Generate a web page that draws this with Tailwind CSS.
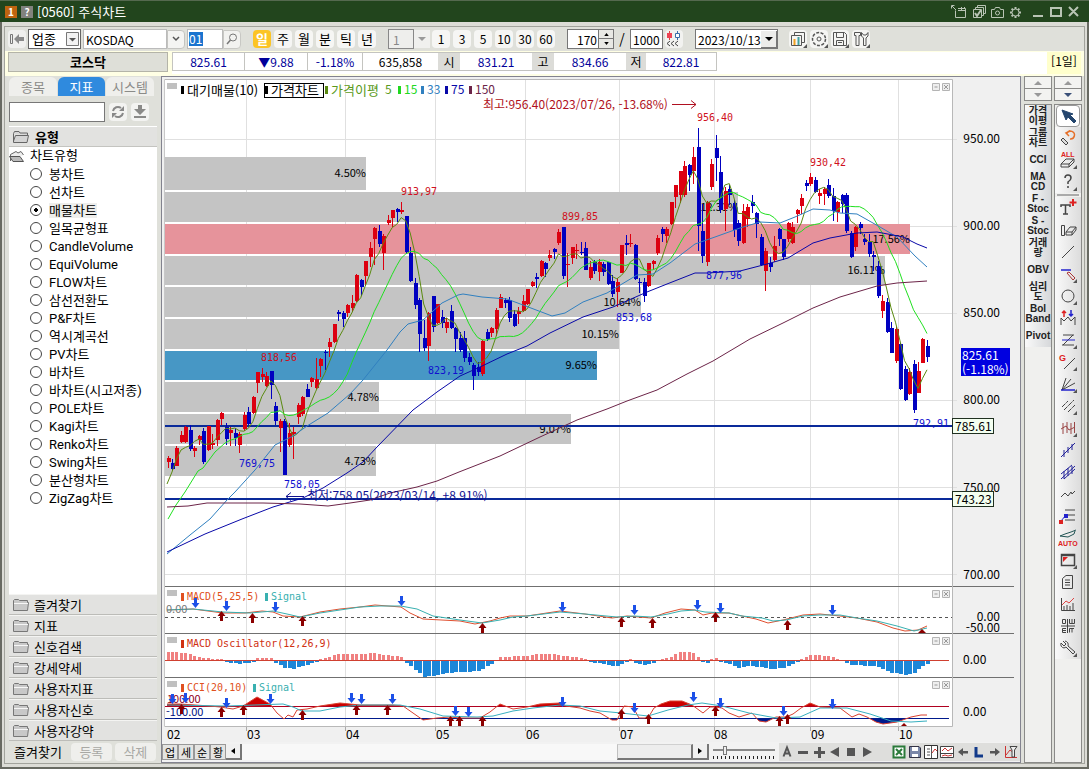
<!DOCTYPE html>
<html lang="ko">
<head>
<meta charset="utf-8">
<title>[0560] 주식차트</title>
<script src="https://cdn.jsdelivr.net/npm/@tailwindcss/browser@4"></script>
</head>
<body class="h-screen overflow-hidden bg-[#dcdcd6] font-['Noto_Sans_CJK_KR',sans-serif] text-xs text-black">
<div class="flex h-screen flex-col border-x-2 border-b-2 border-[#686a62] bg-[#dcdcd6]">
  <header class="-mx-[2px] flex h-[22px] shrink-0 items-center gap-1 border-t border-[#55694f] bg-[#22451d] pr-2 pl-[5px] text-white">
    <span class="flex h-3 w-3 items-center justify-center bg-[#bf6410] text-[10px] font-bold">1</span>
    <button class="flex h-3 w-3 items-center justify-center bg-[#82827e] text-[10px] font-bold" aria-label="도움말">?</button>
    <h1 class="grow text-[13px] leading-5">[0560] 주식차트</h1>
    <svg class="h-[14px] w-[130px]" viewBox="0 0 130 14" fill="none" stroke="#b9c4b5" stroke-width="1">
      <path d="M4.500 5.500V12.500H14.500V3.500H7M7 5.500H14.500M10.500 2V5M13.500 2V4M0.500 3.500V0.500H3.500M1 1L5 5"/>
      <path d="M22.500 4.500H30.500V12.500H22.500ZM24.500 4V2.500H32.500V10.500H31M26.500 2V0.500H34.500V8.500H33"/><path d="M24 8L26 11L30 5" stroke-width="2"/>
      <path d="M40.500 4.500H43.500L44.500 2.500H48.500L49.500 4.500H52.500V12.500H40.500Z"/><circle cx="46.500" cy="8" r="2"/>
      <circle cx="64.500" cy="7.500" r="3.500"/><path stroke-width="2" d="M64.500 2V4M64.500 11V13M59 7.500H61M68 7.500H70M60.600 3.600L62 5M67 10L68.400 11.400M60.600 11.400L62 10M67 5L68.400 3.600"/>
      <path stroke-width="2" d="M82 11H92M100 3H110V11H100ZM118 2L127 11M127 2L118 11"/>
    </svg>
  </header>

  <div class="mx-[2px] mt-[4px] mb-[3px] flex min-h-0 grow flex-col border border-[#a2a39c] bg-[#dfe0da]">
    <!-- toolbar -->
    <div class="flex h-[24px] shrink-0 items-center pl-[3px]">
      <button aria-label="이전" class="mr-[2px] flex h-[18px] w-[18px] items-center justify-center rounded-sm bg-[#f0f0ee]"><svg class="h-3 w-4" viewBox="0 0 16 12"><path d="M1.500 1.500H3.500V10.500H1.500Z" fill="none" stroke="#777"/><path d="M5 6L10 1V4H15V8H10V11Z" fill="#8a8a8a"/></svg></button>
      <div class="relative mr-[2px]"><select aria-label="구분" class="h-[20px] w-[53px] appearance-none border border-[#666] bg-white pl-[3px] text-[13px] leading-4"><option>업종</option></select>
        <svg class="pointer-events-none absolute top-[3px] right-[2px] h-[14px] w-[13px]" viewBox="0 0 13 14"><path d="M.5.5H12.500V13.500H.5Z" fill="#f2f2f2" stroke="#777"/><path d="M3 6H10L6.500 9.500Z" fill="#555"/></svg></div>
      <input aria-label="종목명" value="KOSDAQ" class="h-[20px] w-[84px] border border-[#bbb] bg-white pl-[2px] text-xs">
      <button aria-label="목록" class="mr-[2px] flex h-[19px] w-[18px] items-center justify-center rounded-r-sm border border-[#c4c4c0] bg-[#f4f4f2]"><svg class="h-[6px] w-[8px]" viewBox="0 0 8 6"><path d="M1 1L4 4L7 1" fill="none" stroke="#555" stroke-width="1.500"/></svg></button>
      <div class="flex h-[20px] w-[36px] items-center border border-[#bbb] bg-white pl-px"><input aria-label="코드" value="01" class="h-[14px] w-[14px] bg-[#1a74cf] text-xs text-white"></div>
      <button aria-label="검색" class="mr-3 flex h-[19px] w-[18px] items-center justify-center rounded-r-sm border border-[#c8c8c4] bg-[#f2f2f0]"><svg class="h-3 w-3" viewBox="0 0 12 12" fill="none" stroke="#777"><circle cx="7" cy="4.500" r="3.500"/><path d="M4.500 7L1 11" stroke-width="1.500"/></svg></button>
      <div class="mr-[12px] flex gap-[3px]" id="periods"></div>
      <input aria-label="분 단위" value="1" disabled class="h-[20px] w-[26px] border border-[#888] bg-[#eeeeec] pl-1 text-xs text-[#888]">
      <button aria-label="분 목록" class="mr-[2px] flex h-[18px] w-[16px] items-center justify-center bg-[#f0f0ee]"><svg class="h-1 w-2" viewBox="0 0 8 4"><path d="M0 0H8L4 4Z" fill="#999"/></svg></button>
      <div class="mr-[12px] flex gap-[3px]" id="minutes"></div>
      <input aria-label="조회 개수" value="170" class="h-[20px] w-[31px] border border-r-0 border-[#777] bg-white pr-px text-right text-xs">
      <div class="flex h-[20px] w-[16px] flex-col border border-[#777] bg-[#e8e8e4]">
        <button aria-label="증가" class="flex h-[9px] items-center justify-center border-b border-[#777]"><svg class="h-[3px] w-[5px]" viewBox="0 0 6 4"><path d="M0 4H6L3 0Z"/></svg></button>
        <button aria-label="감소" class="flex h-[9px] items-center justify-center"><svg class="h-[3px] w-[5px]" viewBox="0 0 6 4"><path d="M0 0H6L3 4Z"/></svg></button>
      </div>
      <span class="w-[16px] text-center text-sm leading-4">/</span>
      <input aria-label="전체 개수" value="1000" class="mr-[2px] h-[20px] w-[33px] border border-[#777] bg-white pl-[2px] text-xs">
      <button aria-label="과거 조회" class="mr-[12px] h-[18px] w-[18px] rounded-sm bg-[#f2f2f0]"><svg class="h-[18px] w-[18px]" viewBox="0 0 18 18" fill="none"><path d="M4.500 1V10" stroke="#d44"/><path d="M2 3H7V8H2Z" fill="#e45"/><path d="M12.500 1V10" stroke="#3a6ea8"/><path d="M10.500 3.500H14.500V7.500H10.500Z" fill="#fff" stroke="#3a6ea8"/><path d="M5 11L2 13.500L5 16M9 11L6 13.500L9 16M13 11L10 13.500L13 16" stroke="#444"/></svg></button>
      <div class="relative mr-[11px]"><input aria-label="날짜" value="2023/10/13" class="h-[20px] w-[83px] border border-[#777] bg-white pl-[2px] text-xs">
        <button aria-label="달력" class="absolute top-[2px] right-px flex h-[17px] w-[16px] items-center justify-center border-r border-b border-[#777] bg-[#ececea]"><svg class="h-1 w-2" viewBox="0 0 8 4"><path d="M0 0H8L4 4Z"/></svg></button></div>
      <div class="flex gap-[3px]" id="tools"></div>
    </div>

    <!-- quote row -->
    <div class="flex h-[25px] shrink-0 items-start bg-[#ffffe4] pt-px pb-[2px] pl-[3px]">
      <h2 class="mr-[4px] flex h-[20px] w-[160px] items-center justify-center border border-[#b4b4a8] bg-[#dedfd8] text-[13px] font-bold">코스닥</h2>
      <div class="flex h-full grow items-start bg-white">
        <dl class="flex h-[19px] border border-[#c4c4c0] text-center leading-[17px] text-[#00009a]">
          <dd class="w-[71px]">825.61</dd>
          <dd class="w-[63px] border-l border-[#c4c4c0]">▼9.88</dd>
          <dd class="w-[55px] border-l border-[#c4c4c0]">-1.18%</dd>
          <dd class="w-[76px] border-l border-[#c4c4c0] text-black">635,858</dd>
          <dt class="w-[22px] bg-[#dcdcd8] text-black">시</dt><dd class="w-[72px]">831.21</dd>
          <dt class="w-[22px] bg-[#dcdcd8] text-black">고</dt><dd class="w-[72px]">834.66</dd>
          <dt class="w-[20px] bg-[#dcdcd8] text-black">저</dt><dd class="w-[70px]">822.81</dd>
        </dl>
      </div>
      <span class="mr-[3px] flex h-full w-[34px] items-center justify-center bg-[#ffffcc] pb-1">[1일]</span>
    </div>

    <div class="flex min-h-0 grow">
      <!-- indicator tree -->
      <aside class="mr-[4px] ml-[4px] flex w-[148px] shrink-0 flex-col">
        <div class="mt-px flex h-[19px] gap-px text-center text-[13px] leading-[17px] text-[#8b8b88]">
          <button class="w-[48px] rounded-t-md bg-[#efefec]">종목</button>
          <button class="w-[47px] rounded-t-md bg-[#2f8ade] text-white">지표</button>
          <button class="w-[48px] rounded-t-md bg-[#efefec]">시스템</button>
        </div>
        <div class="flex h-[30px] items-center gap-1 pt-[2px]">
          <input aria-label="지표 검색" class="h-[20px] w-[96px] border border-[#777] bg-white px-1">
          <button aria-label="새로고침" class="flex h-[18px] w-[18px] items-center justify-center rounded-sm bg-[#f3f3f1]"><svg class="h-[14px] w-[14px]" viewBox="0 0 14 14"><path d="M2 6A5 5 0 0 1 10 3M12 8A5 5 0 0 1 4 11" fill="none" stroke="#888" stroke-width="2"/><path d="M8 6H13V1ZM6 8H1V13Z" fill="#888"/></svg></button>
          <button aria-label="내려받기" class="flex h-[18px] w-[18px] items-center justify-center rounded-sm bg-[#f3f3f1]"><svg class="h-[14px] w-[14px]" viewBox="0 0 14 14"><path d="M5 0H9V4H13L7 10L1 4H5ZM1 11H13V13H1Z" fill="#8a8a88"/></svg></button>
        </div>
        <button class="flex h-[21px] shrink-0 items-center gap-[6px] border-y border-t-white border-b-[#c4c4c0] bg-[#e2e2e0] pl-[4px] text-[13px] font-bold"><svg class="h-3 w-4" viewBox="0 0 16 12"><path d="M.5 2.500L1.500 .5H6L7 2H14.500V4M.5 2.500V11.500H14L15.500 4.500H2.500L.5 10" fill="#d4d4d4" stroke="#666"/></svg>유형</button>
        <div class="min-h-0 grow bg-white font-['Roboto','Noto_Sans_CJK_KR',sans-serif]">
          <div class="flex h-[18px] items-center gap-[5px] text-[13px]"><svg class="h-[14px] w-4" viewBox="0 0 16 14"><path d="M1.500 12V5.500L7 2.500L9 4L12 2.500L14.500 6" fill="#eee" stroke="#666"/><path d="M.5 7.500H11L14.500 12.500H4Z" fill="#bbb" stroke="#555"/></svg>차트유형</div>
          <div id="tree"></div>
        </div>
        <div id="groups" class="shrink-0"></div>
        <div class="flex h-[22px] shrink-0 items-center gap-[3px] pl-[5px] text-[13px]">
          <span class="mr-[6px]">즐겨찾기</span>
          <button disabled class="h-[18px] w-[41px] rounded-sm bg-[#efefec] leading-4 text-[#a8a8a4]">등록</button>
          <button disabled class="h-[18px] w-[41px] rounded-sm bg-[#efefec] leading-4 text-[#a8a8a4]">삭제</button>
        </div>
      </aside>

      <!-- chart -->
      <main class="flex min-w-0 grow flex-col border border-[#83838f] bg-[#f0f0f0]">
        <svg id="chart" class="min-h-0 w-full grow" viewBox="162 77 858 665" preserveAspectRatio="xMinYMin meet" role="img" aria-label="KOSDAQ 일봉 차트"></svg>
        <div class="flex h-[20px] shrink-0 items-center bg-[#f2f2f2]">
          <div id="cats" class="flex"></div>
          <button aria-label="왼쪽" class="flex h-[16px] w-[16px] items-center justify-center border-r-2 border-b-2 border-[#777] bg-[#f0f0f0]"><svg class="h-[6px] w-[4px]" viewBox="0 0 4 6"><path d="M4 0V6L0 3Z"/></svg></button>
          <div class="flex h-[16px] grow justify-end bg-[#f8f8f8]"><div class="w-[76px] border-t border-r-2 border-b-2 border-l border-t-[#d0d0d0] border-r-[#777] border-b-[#777] border-l-[#c0c0c0] bg-[#ededed]"></div></div>
          <button aria-label="오른쪽" class="mr-1 flex h-[16px] w-[16px] items-center justify-center border-r-2 border-b-2 border-[#777] bg-[#f0f0f0]"><svg class="h-[6px] w-[4px]" viewBox="0 0 4 6"><path d="M0 0V6L4 3Z"/></svg></button>
          <div class="mr-1 flex w-[62px] flex-col">
            <input type="range" aria-label="확대" min="0" max="100" value="18" class="h-[9px] w-full appearance-none bg-transparent [&::-webkit-slider-runnable-track]:h-[2px] [&::-webkit-slider-runnable-track]:bg-[#888] [&::-webkit-slider-thumb]:-mt-[3px] [&::-webkit-slider-thumb]:h-[9px] [&::-webkit-slider-thumb]:w-[4px] [&::-webkit-slider-thumb]:appearance-none [&::-webkit-slider-thumb]:border [&::-webkit-slider-thumb]:border-[#777] [&::-webkit-slider-thumb]:bg-[#eee]">
            <svg class="h-[5px] w-full" viewBox="0 0 62 5"><path d="M0 3.500H62" stroke="#222" stroke-width="3" stroke-dasharray="1 3"/></svg>
          </div>
          <div id="nav" class="flex h-[18px] w-[241px] shrink-0 items-center bg-[#dededc]"></div>
        </div>
      </main>

      <!-- quick indicators -->
      <div class="ml-[3px] flex w-[28px] shrink-0 flex-col gap-[3px]">
        <div class="flex h-[25px] flex-col border border-[#8a8a88] bg-[#f3f3f1]">
          <button aria-label="지표 위로" class="flex h-[12px] items-center justify-center border-b border-[#8a8a88]"><svg class="h-1 w-2" viewBox="0 0 8 4"><path d="M0 4H8L4 0Z" fill="#999"/></svg></button>
          <button aria-label="지표 아래로" class="flex h-[11px] items-center justify-center"><svg class="h-1 w-2" viewBox="0 0 8 4"><path d="M0 0H8L4 4Z" fill="#999"/></svg></button>
        </div>
        <div id="quick" class="flex grow flex-col border border-[#8a8a88] bg-[#f0f0ee]"></div>
      </div>
      <!-- drawing tools -->
      <div class="mr-[2px] ml-[2px] flex w-[28px] shrink-0 flex-col gap-[3px]">
        <div class="flex h-[25px] flex-col border border-[#8a8a88] bg-[#f3f3f1]">
          <button aria-label="도구 위로" class="flex h-[12px] items-center justify-center border-b border-[#8a8a88]"><svg class="h-1 w-2" viewBox="0 0 8 4"><path d="M0 4H8L4 0Z" fill="#999"/></svg></button>
          <button aria-label="도구 아래로" class="flex h-[11px] items-center justify-center"><svg class="h-1 w-2" viewBox="0 0 8 4"><path d="M0 0H8L4 4Z" fill="#3a5078"/></svg></button>
        </div>
        <div id="draw" class="flex grow flex-col items-center border border-[#8a8a88] bg-[#f0f0ee]"></div>
      </div>
    </div>
  </div>
</div>

<script>
const $ = id => document.getElementById(id);
$('periods').innerHTML = ['일','주','월','분','틱','년'].map((t,i)=>`<button class="${i?'h-[18px] w-[18px] rounded-sm bg-[#f6f6f4] text-[13px] leading-4':'h-[18px] w-[18px] rounded-sm bg-[#fcc425] text-[13px] leading-4 font-bold text-white'}">${t}</button>`).join('');
$('minutes').innerHTML = [1,3,5,10,30,60].map(t=>`<button class="h-[18px] w-[18px] rounded-sm bg-[#f6f6f4] text-xs leading-4">${t}</button>`).join('');
const corner='<path d="M18 14V18H14Z" fill="#555" stroke="none"/>';
$('tools').innerHTML = [
 ['차트 추가','<path d="M5.500 5V2.500H15.500V12.500H13M2.500 5.500H12.500V15.500H2.500Z"/><path d="M5.500 9V15" stroke="#f0a020" stroke-width="2"/><path d="M9.500 7V15" stroke="#40a0a0" stroke-width="2"/>'],
 ['설정','<circle cx="9" cy="9" r="2"/><circle cx="9" cy="9" r="6.500" stroke-dasharray="3 1.500" stroke-width="1.500"/>'],
 ['저장','<path d="M2.500 2.500H13.500L15.500 4.500V15.500H2.500ZM5.500 3V7.500H12.500V3M5.500 15V10.500H12.500V15M7 12.500H11"/>'],
 ['도구','<path d="M2.500 2.500H8.500V5.500H7V15.500H4V5.500H2.500ZM9.500 2.500V6L11.500 8V15.500H14V8L16 6V2.500L14 5H11.500Z"/>']
].map(([n,p])=>`<button aria-label="${n}" class="h-[18px] w-[18px] rounded-sm bg-[#f5f5f3]"><svg class="h-[18px] w-[18px]" viewBox="0 0 18 18" fill="none" stroke="#555">${p}${corner}</svg></button>`).join('');
$('tree').innerHTML = ['봉차트','선차트','매물차트','일목균형표','CandleVolume','EquiVolume','FLOW차트','삼선전환도','P&amp;F차트','역시계곡선','PV차트','바차트','바차트(시고저종)','POLE차트','Kagi차트','Renko차트','Swing차트','분산형차트','ZigZag차트']
 .map((t,i)=>`<label class="flex h-[18px] items-center gap-[7px] pl-[21px]"><input type="radio" name="kind" ${i==2?'checked':''} class="h-3 w-3 shrink-0 appearance-none rounded-full border border-[#444] bg-white checked:bg-[radial-gradient(#000_0_2px,#fff_2px)]"><span class="${i==2?'bg-[#eeeeec] text-[13px] leading-[15px] whitespace-nowrap':'text-[13px] leading-[15px] whitespace-nowrap'}">${t}</span></label>`).join('');
$('groups').innerHTML = ['즐겨찾기','지표','신호검색','강세약세','사용자지표','사용자신호','사용자강약']
 .map(t=>`<button class="flex h-[21px] w-full items-center gap-[5px] border-t border-b border-t-[#f4f4f2] border-b-[#bcbcb8] bg-[#e2e2e0] pl-[4px] text-[13px] leading-4"><svg class="h-3 w-4" viewBox="0 0 16 12"><path d="M.5 11.500V1.500L1.500 .5H5.500L6.500 1.500H14.500V3.500H15.500L14.500 11.500Z" fill="#c8c8c8" stroke="#777"/><path d="M1 4.500H15" stroke="#f6f6f6"/></svg>${t}</button>`).join('');
$('cats').innerHTML = ['업','세','순','황'].map(t=>`<button class="h-[16px] w-[16px] border border-[#999] bg-[#e4e4e2] text-[11px] leading-[13px]">${t}</button>`).join('');
$('nav').innerHTML = [
 ['글자','<path d="M4.500 12.500L8 3.500L11.500 12.500M6 9.500H10" fill="none" stroke="#555" stroke-width="2"/>'],
 ['축소','<path d="M3 7H13V10H3Z" fill="#555"/>'],['확대','<path d="M3 7H7V3H10V7H14V10H10V14H7V10H3Z" fill="#555"/>'],
 ['이전','<path d="M12 3V13L3 8Z" fill="#555"/>'],['정지','<path d="M4 4H12V12H4Z" fill="#555"/>'],['다음','<path d="M4 3V13L13 8Z" fill="#555"/>'],['',''],
 ['엑셀','<path d="M2.500 2.500H13.500V13.500H2.500Z" fill="#fff" stroke="#2a7a3a" stroke-width="2"/><path d="M5 5L11 11M11 5L5 11" stroke="#2a7a3a" stroke-width="2"/>'],
 ['저장','<path d="M2.500 2.500H12L13.500 4V13.500H2.500Z" fill="#7a87a8" stroke="#334"/><path d="M5 3H11V7H5ZM5 10H11V13H5Z" fill="#fff"/>'],
 ['차트 1','<path d="M1.500 1.500H14.500V14.500H1.500Z" fill="#fff" stroke="#333"/><path d="M8.500 2V14M4 5H7M4 8H7M4 11H7" stroke="#555"/><path d="M9 9L12 5L14 7" stroke="#c33" fill="none"/>'],
 ['차트 2','<path d="M1.500 2.500H14.500V13.500H1.500ZM2 9.500H14" fill="#fff" stroke="#444"/><path d="M3 7L6 4L9 7L13 4M3 12L6 11L9 12L13 11" stroke="#c33" fill="none"/>'],
 ['왼쪽','<path d="M3 8L8 4V7H13V9.500H8V12Z" fill="#555"/>'],['기준선','<path d="M5 3V12H12" fill="none" stroke="#123a8a" stroke-width="3"/>'],['오른쪽','<path d="M13 8L8 4V7H3V9.500H8V12Z" fill="#555"/>'],
 ['환경','<path d="M2.500 2V13.500H14M3 11L7 6L11 9" fill="none" stroke="#c33"/><path d="M7 2.500H14L11.500 6V13H9V6Z" fill="#eee" stroke="#444"/>']
].map(([n,p])=>n?`<button aria-label="${n}" class="h-4 w-4"><svg class="h-4 w-4" viewBox="0 0 16 16">${p}</svg></button>`:'<span class="w-4"></span>').join('');
$('quick').innerHTML = ['가격<br>이평','그룹<br>차트','CCI','MA<br>CD','F -<br>Stoc','S -<br>Stoc','거래<br>량','OBV','심리<br>도','Bol<br>Band','Pivot']
 .map(t=>`<button class="flex h-[22px] w-full shrink-0 items-center justify-center bg-linear-to-r from-[#fafafa] to-[#d6d8da] font-['Liberation_Sans','Noto_Sans_CJK_KR',sans-serif] text-[10px] leading-[10px] font-bold text-[#222]"><span>${t}</span></button>`).join('');
const tri='<path d="M19 15V19H15Z" fill="#555" stroke="none"/>';
$('draw').innerHTML = [
 ['선택','<path d="M4 4L15 8L12 9L18 15L16 17L10 11L8 14Z" fill="#24466e" stroke="#24466e"/>'],
 ['되돌리기','<path d="M9 5A4 4 0 1 1 12 11M12 3L8 5L11 8" stroke="#e5702a" stroke-width="1.500"/><path d="M3 12L5 10L10 15L8 17Z" fill="#ddd"/>'],
 ['전체 삭제','<text x="3" y="7" font-size="7" font-weight="bold" fill="#d22" stroke="none" font-family="Liberation Sans">ALL</text><path d="M3 14L8 9H16L11 14ZM3 14V17H11V14M11 17L16 12V9"/>'+tri],
 ['도움말','<path d="M7 6Q7 3 10 3T13 6Q13 8 10 10V12M10 14V16" stroke-width="1.500"/>'+tri],
 ['-',''],
 ['문자','<path d="M3 9V7H12V9M7.500 7V16M5 16H10" stroke-width="1.500"/><path d="M15 1V8M11.500 4.500H18.500" stroke="#d22" stroke-width="2"/>'],
 ['지우개','<path d="M3.500 5.500H6.500V15.500H3.500ZM8 12L12 7H18L14 12ZM8 12V15H14L18 10V7M14 12V15"/>'],
 ['직선','<path d="M4 16L16 4"/>'],
 ['수평선','<path d="M3 6H13" stroke="#22c" stroke-width="1.500"/><path d="M9 9L11 8L17 14L15 16Z" stroke="#a33"/>'+tri],
 ['원','<circle cx="10" cy="10" r="6"/>'+tri],
 ['패턴','<path d="M3 17V10L6 13L10 9L13 13L17 9V17"/><path d="M6 9V3M4 5L6 3L8 5" stroke="#d22" stroke-width="1.500"/><path d="M13 2V8M11 6L13 8L15 6" stroke="#22c" stroke-width="1.500"/>'],
 ['삼분선','<path d="M5 5H16M4 15H16M5 15L15 5"/><path d="M4 10H17" stroke="#22c"/>'+tri],
 ['갠','<path d="M6 17L17 6"/><text x="1" y="9" font-size="9" font-weight="bold" fill="#d22" stroke="none" font-family="Liberation Sans">G</text>'+tri],
 ['팬','<path d="M4 16L8 4M4 16L13 5M4 16L17 9"/><path d="M3 16H17" stroke="#22c" stroke-width="1.500"/>'+tri],
 ['평행','<path d="M4 11L10 5M6 14L16 4M10 16L17 9" stroke-dasharray="5 1"/>'+tri],
 ['주기','<path d="M5 5V16M9 4V15M13 5V16M16.500 4V15M3 11L8 8L11 12L17 9" stroke="#944"/>'+tri],
 ['채널','<path d="M3 17L17 3M6 10V17M10 7V13M14 4V10" stroke="#229"/>'],
 ['이중채널','<path d="M3 12L14 3M6 17L17 7M3 17L17 4M6 9V17M10 6V14M14 4V12" stroke="#229"/>'],
 ['꺾은선','<path d="M3 13L7 9L10 12L13 8L14 10L17 7"/>'],
 ['피보나치','<path d="M7 4H17M8 9H17M7 14H17"/><path d="M3 15L8 9" stroke="#22c"/><path d="M1 14H5V18H1Z" fill="#d22" stroke="none"/><path d="M6 8H10V12H6Z" fill="#22c" stroke="none"/>'],
 ['자동','<path d="M2 8L7 6L13 4L18 2M2 8L10 9L16 6L17 3" stroke="#255"/><text x="0" y="18" font-size="7" font-weight="bold" fill="#d22" stroke="none" font-family="Liberation Sans">AUTO</text>'],
 ['창','<path d="M3.500 4.500H16.500V15.500H3.500ZM3.500 5.500H16.500" stroke-width="1.500"/><path d="M5 7H10L5 12Z" fill="#d22" stroke="none"/>'+tri],
 ['문서','<path d="M4.500 6.500L8 3.500H14.500V16.500H4.500ZM7 8H12M7 10.500H12M7 13H12"/>'],
 ['통계','<path d="M3.500 4V16.500H17M6 16V12M9 16V11M12 16V12M15 16V9"/><path d="M4 11L8 7L11 9L16 4" stroke="#d44"/>'],
 ['분할','<path d="M4.500 3.500H7.500V7.500H4.500ZM11.500 3V7.500H16.500V3M14 3V7M8 12.500H4.500V16.500H8M4.500 14.500H8M16 12.500H11.500V16.500M14 12.500V16.500M3 10H17M9.500 3V17"/>'],
 ['공구','<path d="M5 3L8 6L6 8L3 5Q2 9 6 10L8 9L15 16L17 14L10 8Q11 4 7 3"/>'+tri]
].map(([n,p],i)=>n=='-'?'<hr class="my-px w-[22px] border-t-2 border-[#aaa]">':`<button aria-label="${n}" class="${i?'flex h-[22px] w-full shrink-0 items-center justify-center bg-linear-to-r from-[#fafafa] to-[#dcdcdc]':'flex h-[22px] w-[24px] shrink-0 items-center justify-center rounded-sm border border-[#999] bg-white'}"><svg class="h-5 w-5" viewBox="0 0 20 20" fill="none" stroke="#444">${p}</svg></button>`).join('');

/* Chart: [high, body top, body bottom, low], negative first value marks a falling day */
const D=`456,458,462,468 -459,463,469,470 446,448,466,466 431,435,442,443 426,427,442,443 -425,430,449,451 446,448,451,457 435,436,440,445 -428,431,462,464 426,426,450,451 434,443,445,449 419,420,440,446 412,413,419,425 -423,427,439,445 427,430,433,446 -428,433,438,446 432,434,445,453 412,415,429,431 -407,412,424,425 396,397,413,414 372,372,383,393 368,374,377,382 372,376,386,387 -371,371,385,399 -402,406,421,425 419,421,428,452 -419,421,475,475 423,433,445,447 427,432,434,459 403,405,417,424 396,397,414,416 -384,389,397,397 377,378,382,387 358,379,388,389 358,359,366,377 -350,352,353,370 338,342,347,357 324,324,342,343 -310,312,314,321 -311,313,319,327 304,305,313,317 295,303,308,312 274,275,301,302 -279,280,287,296 261,261,276,286 242,248,257,267 227,228,239,265 -225,231,244,247 234,236,253,270 215,220,223,225 210,210,218,227 -208,209,212,222 202,210,212,214 -216,216,252,254 -247,253,281,282 -278,283,305,309 -298,300,334,352 -320,338,348,351 312,313,346,361 -296,296,327,332 304,304,323,324 -310,317,323,328 318,322,328,333 -305,311,328,329 -327,328,339,352 -332,338,350,352 -331,338,358,362 -353,357,362,365 -363,365,376,390 -362,367,372,376 340,341,374,376 -329,332,339,341 327,328,333,337 308,310,329,336 294,297,308,308 -298,300,303,308 -297,300,318,322 -310,314,326,327 307,311,314,324 295,301,311,312 289,289,304,305 281,282,286,287 -273,277,279,288 260,261,276,277 -262,263,269,277 250,255,258,261 -248,249,252,259 229,232,243,245 -227,227,276,279 253,264,265,287 247,247,258,264 244,250,251,259 -242,252,253,255 -242,248,270,270 261,267,278,280 -260,262,271,274 259,262,272,281 -262,264,272,276 -262,262,284,285 -275,281,294,297 278,282,292,307 245,245,273,273 -235,243,245,255 234,243,244,247 -244,245,279,280 -278,282,283,293 -278,282,296,302 263,263,286,287 260,261,264,270 235,238,253,255 -227,229,234,242 227,229,236,243 202,202,224,225 185,185,197,208 171,171,195,203 161,166,195,197 -164,165,175,191 147,157,171,184 -128,147,226,251 -204,231,256,263 201,202,262,266 159,164,187,190 -135,148,158,181 -156,172,210,213 187,191,209,231 -185,189,195,205 -200,203,230,237 -220,223,241,246 204,211,243,244 204,207,219,227 -195,202,206,213 -212,213,224,238 -234,237,265,266 248,251,271,291 -257,263,267,272 236,246,260,262 -228,229,239,246 -239,239,257,260 222,223,239,242 222,227,243,244 209,210,214,223 194,198,206,214 -180,183,186,191 173,177,184,186 -177,180,192,193 189,193,196,204 187,189,194,205 -179,185,196,198 -188,196,211,221 201,202,212,222 -194,195,204,213 -193,195,231,233 -231,233,257,258 226,227,247,251 -222,224,228,234 -234,239,242,245 -234,242,254,257 -251,255,257,271 -261,266,296,298 295,301,311,318 -298,302,332,333 -322,328,353,353 327,329,361,363 -343,344,389,390 -366,369,400,401 368,372,394,395 -360,364,410,413 362,371,393,393 338,339,363,363 -340,346,357,362`.split(' ').map(s=>s.split(',').map(Number));
const X=i=>167.5+4.494*i;
let s='';
const R=(x,y,w,h,c,e='')=>s+=`<rect x="${x}" y="${y}" width="${w}" height="${h}" fill="${c}" ${e}/>`;
const L=(p,c,e='')=>s+=`<polyline points="${p}" fill="none" stroke="${c}" ${e}/>`;
const SANS="'Noto Sans CJK KR',sans-serif", MONO="'DejaVu Sans Mono','Noto Sans CJK KR',monospace";
const T=(x,y,t,c='#000',z=12,f=SANS,e='')=>s+=`<text x="${x}" y="${y}" fill="${c}" font-size="${z}" font-family="${f}" ${e}>${t}</text>`;
R(165,80,787,646,'#fff');
for(const x of [246.5,345.5,435.5,525.5,619.5,714.5,810.5,898.5]){L(`${x},80 ${x},726`,'#e0e0e0');L(`${x},726 ${x},731`,'#aaa');}
for(const y of [139.5,226.5,313.5,400.5,487.5,574.5]) L(`165,${y} 957,${y}`,'#e0e0e0');
[[157,33,366],[192,30,738],[224,30,910,'#e6939b'],[256,29,885],[287,30,641],[319,30,619],[351,29,597,'#4797c5'],[382,30,379],[414,30,571],[446,30,376]].forEach(([y,h,x,c])=>R(165,y,x-165,h,c||'#c4c4c4'));
[[366,177,'4.50%'],[738,211,'12.31%'],[910,243,'17.56%'],[885,274,'16.11%'],[641,306,'10.64%'],[619,338,'10.15%'],[597,369,'9.65%'],[379,401,'4.78%'],[571,433,'9.07%'],[376,465,'4.73%']].forEach(([x,y,t])=>T(x,y,t,'#000',11,SANS,'text-anchor="end"'));
L('165,426 952,426','#0a2a9a','stroke-width="2"');L('165,499 952,499','#0a2a9a','stroke-width="2"');
D.forEach((d,i)=>{const c=d[0]<0?'#0000c0':'#dc0010',x=Math.round(X(i));R(x,Math.abs(d[0]),1,d[3]-Math.abs(d[0]),c);R(x-1,d[1],4,Math.max(1,d[2]-d[1]),c);});
const close=D.map(d=>d[0]<0?d[2]:d[1]);
const ma=(n,pre)=>{let p=pre;for(let i=n-1;i<170;i++){let t=0;for(let k=0;k<n;k++)t+=close[i-k];p+=` ${X(i).toFixed(1)},${(t/n).toFixed(1)}`;}return p;};
L(ma(5,'167,484 172,472 176,460 181,450'),'#5a8a10');
L(ma(15,'168,519 176,505 185,492 198,471 203,468 215,452 225,443'),'#20e020');
L('167,554 190,535 210,519 227,500 235,492 255,470 275,445 293,436 307,426 328,413 350,394 363,380 387,350 400,332 408,324 423,320 442,303 458,295 463,294 482,297 507,299 523,305 552,316 565,313 583,302 607,293 617,287 637,275 653,274 670,263 695,244 715,237 740,228 760,222 780,223 795,217 813,209 830,210 840,213 857,214 880,227 897,237 915,256 927,267','#3080c0');
L('167,552 205,534 242,519 273,507 303,498 323,488 347,473 363,462 377,447 413,410 437,392 460,376 480,367 507,354 527,346 550,333 583,317 613,307 647,292 667,284 695,273 707,273 740,271 767,264 788,258 813,243 830,238 857,233 877,232 893,235 903,237 917,244 927,248','#0808a8');
L('167,507 188,506 207,503 263,503 300,504 328,506 350,503 370,500 390,493 417,487 437,481 459,472 500,456 540,437 577,420 607,409 627,401 657,390 687,374 713,361 750,339 783,323 813,308 840,297 877,286 897,283 927,281','#6c2448');
[[401,195,'913,97',1],[562,220,'899,85',1],[697,121,'956,40',1],[810,166,'930,42',1],[261,361,'818,56',1],[428,374,'823,19'],[616,321,'853,68'],[706,279,'877,96'],[239,467,'769,75'],[284,488,'758,05'],[913,427,'792,91']].forEach(([x,y,t,r])=>T(x,y,t,r?'#d01020':'#1010d0',10,MONO));
T(483,109,'최고:956.40(2023/07/26, -13.68%)','#b01020');L('672,104.5 696,104.5','#b01020');L('691,100.5 696,104.5 691,108.5','#b01020');
T(307,500,'최저:758.05(2023/03/14, +8.91%)','#101090');L('286,496.5 304,496.5','#101090');L('291,492.5 286,496.5 291,500.5','#101090');

// legend
const flag=y=>R(167,y,10,6,'#c0c0c0');
const mark=(x,y,c)=>R(x,y,3,8,c);
flag(83);mark(181,86,'#000');T(187,95,'대기매물(10)','#000',13);s+='<rect x="264.500" y="83.500" width="59" height="14" fill="none" stroke="#000"/>';mark(265,86,'#000');T(271,95,'가격차트','#000',13);
mark(325,86,'#5a8a10');T(331,95,'가격이평','#5a9a20',13);T(385,94,'5','#5a9a20');
[[398,'15','#20d820'],[421,'33','#3080c0'],[445,'75','#0808a8'],[469,'150','#6c2448']].forEach(([x,t,c])=>{mark(x,86,c);T(x+6,94,t,c);});
// panel frames
for(const y of [586.5,633.5,677.5]) L(`164,${y} 1014,${y}`,'#707070');
L('164.5,726.5 952.5,726.5 952.5,79.5 164.5,79.5','#b8b8b8');L('164.5,80 164.5,726','#c8c8c8');
for(const y of [83,590,637,681]) s+=`<path d="M932.500 ${y}.500h7v7h-7zM942.500 ${y}.500h7v7h-7z" fill="#eee" stroke="#b4b4b4"/><path d="M934.500 ${y+4}h3M944 ${y+2}l4 4m0-4l-4 4" stroke="#999" fill="none"/>`;
// oscillators
const UP=(x,y)=>s+=`<path d="M${x} ${y-5}l4 5h-2.500v5h-3v-5h-2.500z" fill="#8b0000"/>`,DN=(x,y)=>s+=`<path d="M${x} ${y+5}l4-5h-2.500v-5h-3v5h-2.500z" fill="#1c50e8"/>`;
const arrows=(f,a)=>a.forEach(p=>f(p[0]+.5,p[1]));
flag(590);L('165,617.5 952,617.5','#555','stroke-dasharray="3 3"');
L('167,610 193,609 223,613 245,613 262,611 273,612 283,616 300,617 320,612 340,609 360,607 375,605 401,607 410,613 423,619 460,621 475,624 490,621 500,618 510,616 527,616 560,611 585,614 612,618 627,616 651,618 665,613 681,609 695,610 703,615 712,613 729,613 742,616 756,619 768,623 783,620 803,615 820,614 840,616 857,618 877,622 893,628 905,631 918,630 927,626','#e05030');
L('167,610 193,609 223,612 250,613 273,611 287,614 300,617 320,613 340,610 360,607 380,606 401,606 417,609 433,616 460,620 482,623 500,620 513,617 527,616 560,612 585,614 617,617 634,616 651,617 668,614 681,611 695,610 705,612 729,613 742,616 762,618 773,621 786,620 803,616 820,615 840,615 857,618 877,621 897,626 914,631 927,628','#38b0b0');
mark(181,593,'#e05020');T(187,600,'MACD(5,25,5)','#e05020',10,MONO);mark(265,593,'#38b0b0');T(271,600,'Signal','#38b0b0',10,MONO);T(166,613,'0.00','#777',11);
arrows(DN,[[195,603],[226,606],[275,607],[401,601],[562,607],[634,610],[697,605],[720,608],[832,610]]);
arrows(UP,[[221,616],[252,618],[302,621],[482,628],[621,622],[652,623],[715,617],[787,625]]);s+='<path d="M918 633l4-4 4 4z" fill="#8b0000"/>';
flag(637);L('165,660.5 949,660.5','#d04030');
const K=[[0,8],[4,7],[5,6],[6,4],[8,2],[10,1],[12,1],[13,-1],[16,-3],[18,-2],[19,-1],[20,2],[23,2],[24,-2],[26,-7],[28,-8],[30,-5],[33,-1],[34,1],[36,3],[38,6],[44,6],[46,7],[48,5],[52,3],[53,-2],[55,-9],[57,-16],[59,-15],[62,-12],[69,-10],[70,-8],[72,-3],[73,0],[74,3],[80,4],[82,6],[86,6],[88,4],[92,2],[93,1],[94,-1],[97,-3],[99,-5],[100,-5],[102,-1],[103,1],[104,-2],[106,-4],[108,-2],[109,0],[110,1],[112,3],[114,8],[115,8],[117,7],[118,3],[119,-1],[120,-2],[121,1],[122,2],[123,-1],[125,-3],[127,-7],[129,-5],[132,-6],[134,-8],[137,-7],[138,-5],[140,-1],[141,1],[143,5],[147,4],[149,1],[150,0],[151,-2],[152,-4],[157,-5],[159,-8],[161,-12],[163,-13],[164,-14],[166,-12],[168,-5],[169,-3]];
for(let i=0,k=0;i<170;i++){while(k<K.length-2&&K[k+1][0]<=i)k++;const [a,u]=K[k],[b,v]=K[k+1],h=Math.round(u+(v-u)*(i-a)/(b-a)),x=Math.round(X(i))-1;if(h>0)R(x,660-h,3,h,'#f08080');else if(h<0)R(x,661,4,-h,'#1c86d8');}
mark(181,640,'#d03010');T(187,647,'MACD Oscillator(12,26,9)','#d03010',10,MONO);
flag(681);
const cci='167,704 180,704 210,706 220,707 233,709 243,706 257,697 270,704 277,713 284,719 288,715 293,717 297,710 307,709 320,706 340,703 360,705 393,705 403,706 413,713 423,720 437,718 450,717 460,718 480,718 490,712 500,704 513,709 527,707 540,704 560,703 566,706 580,708 590,711 600,713 612,720 617,720 621,712 624,706 633,707 639,718 648,718 654,708 661,704 670,701 682,701 692,705 703,713 710,707 715,707 722,708 729,713 739,717 752,713 759,721 766,722 776,717 786,717 793,714 801,708 810,703 820,707 840,708 852,717 859,714 867,717 876,722 883,724 897,722 911,717 921,715 927,715';
s+=`<clipPath id="over"><rect x="165" y="678" width="787" height="29"/></clipPath><clipPath id="under"><rect x="165" y="718" width="787" height="8"/></clipPath><polygon points="167,707 ${cci} 927,707" fill="#cc0000" clip-path="url(#over)"/><polygon points="167,718 ${cci} 927,718" fill="#001a8c" clip-path="url(#under)"/>`;
L('165,706.500 949,706.500','#b00020');L('165,718.500 949,718.500','#001a8c');
L(cci,'#d84030');
L('167,705 227,706 283,704 293,707 302,711 320,711 340,707 360,705 400,705 420,709 443,716 477,717 493,716 513,711 533,708 560,705 580,706 600,711 621,713 648,716 668,710 688,705 702,703 722,706 749,713 776,718 800,717 820,708 847,708 870,714 891,721 911,722 927,721','#38b0c0');
mark(181,684,'#e05020');T(187,691,'CCI(20,10)','#e05020',10,MONO);mark(253,684,'#38b0b0');T(259,691,'Signal','#38b0b0',10,MONO);
T(167,703,'100.00','#900020',11);T(166,716,'-100.00','#001080',11);
arrows(DN,[[172,699],[185,698],[226,703],[270,699],[351,698],[361,699],[392,699],[455,711],[468,712],[562,702],[634,708],[693,697],[720,703],[783,711],[832,704]]);
arrows(UP,[[181,709],[221,712],[243,710],[302,715],[356,710],[387,710],[450,721],[459,721],[482,721],[621,714],[648,719],[715,711],[779,721],[787,719]]);
s+='<path d="M901 726l3-3 3 3z" fill="#8b0000"/>';
// axes
['950.00','900.00','850.00','800.00','750.00','700.00'].forEach((t,i)=>T(1000,[143,230,317,404,492,579][i],t,'#000',12,SANS,'text-anchor="end"'));
R(961,348,49,28,'#0000e0');T(962,360,'825.61','#fff');T(962,374,'(-1.18%)','#fff');
for(const [y,t] of [[418,'785.61'],[491,'743.23']]){s+=`<rect x="952.500" y="${y}.500" width="41" height="15" fill="#f4fff0" stroke="#203020"/>`;T(955,y+13,t);}
T(1000,621,'0.00','#000',12,SANS,'text-anchor="end"');T(1000,632,'-50.00','#000',12,SANS,'text-anchor="end"');
T(963,664,'0.00');T(963,716,'0.00');
[[167,'02'],[247,'03'],[346,'04'],[436,'05'],[526,'06'],[620,'07'],[714,'08'],[811,'09'],[899,'10']].forEach(([x,t])=>T(x,739,t));
$('chart').innerHTML=s;
</script>
</body>
</html>
